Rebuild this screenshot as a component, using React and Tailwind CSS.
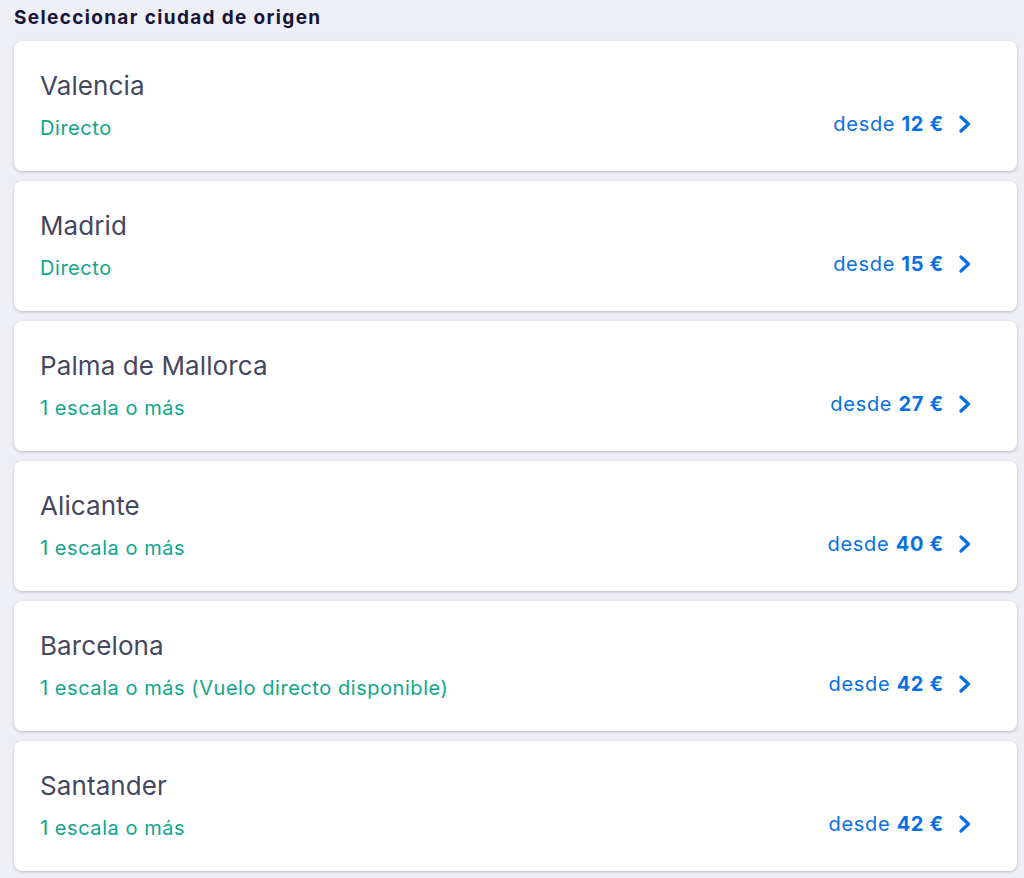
export default function App() {
  const items = [
    { name: "Valencia", sub: "Directo", price: "12" },
    { name: "Madrid", sub: "Directo", price: "15" },
    { name: "Palma de Mallorca", sub: "1 escala o más", price: "27" },
    { name: "Alicante", sub: "1 escala o más", price: "40" },
    { name: "Barcelona", sub: "1 escala o más (Vuelo directo disponible)", price: "42" },
    { name: "Santander", sub: "1 escala o más", price: "42" },
  ];
  return (
    <div className="min-h-[878px] w-[1024px] bg-[#eeeff5] pl-[14px] pr-[7px] pt-[6px]" style={{ fontFamily: "Inter, 'Noto Sans', sans-serif" }}>
      <h1 className="text-[19px] leading-[24px] font-bold text-[#161538] tracking-[1.35px]">Seleccionar ciudad de origen</h1>
      <div className="mt-[11px] flex flex-col gap-[10px]">
        {items.map((it) => (
          <div key={it.name} className="h-[130px] rounded-[8px] bg-white shadow-[0_1px_3px_rgba(37,32,31,0.25)] flex items-start justify-between pl-[26px] pr-[45px]">
            <div className="flex flex-col">
              <div className="mt-[29px] text-[26px] leading-[32px] text-[#45475f] tracking-[0.1px]">{it.name}</div>
              <div className="mt-[14px] text-[20px] leading-[24px] text-[#0fa68b] tracking-[0.55px]">{it.sub}</div>
            </div>
            <div className="mt-[71px] flex items-center text-[20px] leading-[24px] text-[#0770e3] tracking-[0.7px]">
              <span>desde&nbsp;</span>
              <span className="font-bold">{it.price} €</span>
              <svg className="ml-[14px]" width="14" height="20" viewBox="0 0 14 20" fill="none">
                <path d="M3 3 L10.5 10 L3 17" stroke="#0770e3" strokeWidth="3.4" strokeLinecap="round" strokeLinejoin="round" />
              </svg>
            </div>
          </div>
        ))}
      </div>
    </div>
  );
}
